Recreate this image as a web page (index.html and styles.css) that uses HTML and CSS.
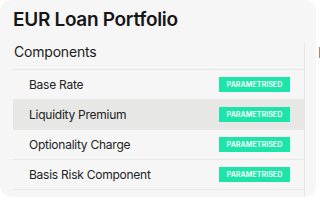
FILE: index.html
```html
<!DOCTYPE html>
<html lang="en">
<head>
<meta charset="utf-8">
<title>EUR Loan Portfolio</title>
<link rel="stylesheet" href="styles.css">
</head>
<body>
<div class="layout">
  <section class="card">
    <h1 class="title">EUR Loan Portfolio</h1>
    <div class="panel">
      <div class="panel-head">Components</div>
      <ul class="rows">
        <li class="row"><span class="name">Base Rate</span><span class="badge">PARAMETRISED</span></li>
        <li class="row active"><span class="name">Liquidity Premium</span><span class="badge">PARAMETRISED</span></li>
        <li class="row"><span class="name">Optionality Charge</span><span class="badge">PARAMETRISED</span></li>
        <li class="row"><span class="name">Basis Risk Component</span><span class="badge">PARAMETRISED</span></li>
        <li class="row"><span class="name">Capital Charge</span><span class="badge">PARAMETRISED</span></li>
      </ul>
    </div>
  </section>
  <aside class="side">
    <div class="side-head">Details</div>
  </aside>
</div>
</body>
</html>
```
FILE: styles.css
```css
* { box-sizing: border-box; }
html, body { margin: 0; padding: 0; background: #ffffff; }
body { font-family: Inter, "Noto Sans", sans-serif; color: #1b1b1b; overflow: hidden; }
.layout { display: flex; gap: 2px; width: 600px; }
.card {
  flex: 0 0 316px;
  height: 197px;
  background: #f6f6f6;
  border-radius: 12px;
  padding: 8px 11px 0 13px;
  overflow: hidden;
}
.title {
  margin: 0 0 11px 0;
  font-size: 19px;
  line-height: 24px;
  font-weight: 600;
  letter-spacing: -0.3px;
  color: #161616;
}
.panel { border-right: 1px solid #e6e6e6; width: 292px; }
.panel-head {
  font-size: 14px;
  line-height: 17px;
  padding: 0 0 9px 1px;
  letter-spacing: -0.2px;
  border-bottom: 1px solid #e6e6e6;
  color: #1b1b1b;
}
.rows { list-style: none; margin: 0; padding: 0; }
.row {
  display: flex;
  align-items: center;
  justify-content: space-between;
  height: 30px;
  padding: 0 14px 0 16px;
  border-bottom: 1px solid #e8e8e8;
  font-size: 12px;
  letter-spacing: -0.25px;
  color: #222;
}
.row.active { background: #e7e8e5; }
.badge {
  display: inline-flex;
  align-items: center;
  justify-content: center;
  width: 71px;
  height: 15px;
  background: #1de4a9;
  color: #ffffff;
  font-size: 7.2px;
  font-weight: 600;
  letter-spacing: 0;
}
.side { flex: 0 0 200px; padding-top: 44px; }
.side-head { font-size: 14px; line-height: 17px; color: #666; }
```
